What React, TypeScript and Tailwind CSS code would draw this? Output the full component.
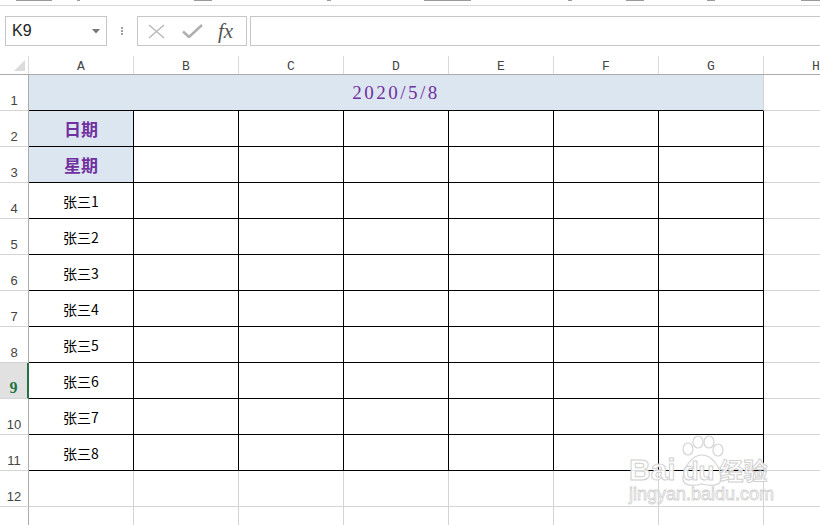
import React from 'react'

const cols = ['A', 'B', 'C', 'D', 'E', 'F', 'G']

function RowHeader({ n, hidden }: { n: number; hidden?: boolean }) {
  const active = n === 9
  return (
    <div
      className={
        active
          ? 'w-[29px] shrink-0 h-full flex items-end justify-center pb-[2px] bg-[#e1e1e1] border-r-2 border-b border-r-[#217346] border-b-[#d4d4d4]'
          : 'w-[29px] shrink-0 h-full flex items-end justify-center pb-[3px] border-r border-b border-r-[#ababab] border-b-[#d4d4d4]'
      }
    >
      {hidden ? null : active ? (
        <span className="font-['Liberation_Serif'] font-bold text-[16px] leading-none text-[#217346]">9</span>
      ) : (
        <span className="font-['Liberation_Sans'] text-[13px] leading-none text-[#444]">{n}</span>
      )}
    </div>
  )
}

function GrayCell() {
  return <div className="w-[105px] shrink-0 h-full border-r border-b border-[#d4d4d4]" />
}

function Watermark() {
  return (
    <div className="absolute left-[629px] top-[435px] w-[150px] pointer-events-none select-none">
      <svg width="52" height="54" viewBox="0 0 52 54" className="absolute left-[47px] top-0" fill="none" stroke="#d4d4d4" strokeWidth="1.2">
        <ellipse cx="12" cy="14" rx="5" ry="6" />
        <ellipse cx="22" cy="7" rx="5" ry="6" />
        <ellipse cx="33" cy="7" rx="5" ry="6" />
        <ellipse cx="42" cy="15" rx="5" ry="6" />
        <path d="M26 20 C16 20 8 32 7 42 C6 50 14 52 26 49 C38 52 46 50 45 42 C44 32 36 20 26 20 Z" />
      </svg>
      <div className="relative flex items-baseline mt-[20px] h-[30px] text-white/90 [-webkit-text-stroke:1px_#d0d0d0]">
        <span className="font-['Liberation_Sans'] font-bold text-[30px] leading-none">Bai</span>
        <span className="ml-[7px] font-['Liberation_Sans'] font-bold text-[26px] leading-none">du</span>
        <span className="ml-[5px] font-['Noto_Sans_CJK_SC',sans-serif] font-bold text-[24px] leading-none">经验</span>
      </div>
      <div className="relative h-[18px] font-['Liberation_Sans'] text-[18px] leading-none text-white/90 [-webkit-text-stroke:0.8px_#d0d0d0]">
        jingyan.baidu.com
      </div>
    </div>
  )
}

export default function App() {
  const names = ['张三1', '张三2', '张三3', '张三4', '张三5', '张三6', '张三7', '张三8']

  return (
    <div className="relative w-[820px] h-[525px] overflow-hidden bg-white flex flex-col">
      {/* clipped ribbon text above */}
      <div className="h-[6px] shrink-0 border-b border-[#d6d6d6] flex items-start">
        <div className="flex h-[2px] w-full">
          <span className="ml-[16px] w-[36px] h-[1px] bg-[#9a9a9a]" />
          <span className="ml-[25px] w-[3px] h-[1px] bg-[#9a9a9a]" />
          <span className="ml-[114px] w-[18px] h-[1px] bg-[#9a9a9a]" />
          <span className="ml-[115px] w-[4px] h-[1px] bg-[#9a9a9a]" />
          <span className="ml-[93px] w-[47px] h-[1px] bg-[#9a9a9a]" />
          <span className="ml-[97px] w-[4px] h-[1px] bg-[#9a9a9a]" />
          <span className="ml-[54px] w-[18px] h-[1px] bg-[#9a9a9a]" />
          <span className="ml-[63px] w-[8px] h-[1px] bg-[#9a9a9a]" />
          <span className="ml-[86px] w-[19px] h-[1px] bg-[#9a9a9a]" />
        </div>
      </div>

      {/* formula bar */}
      <div className="mt-[10px] h-[30px] shrink-0 flex">
        <div className="ml-[5px] w-[102px] h-full border border-[#c6c6c6] flex items-center pl-[6px] pr-[6px]">
          <span className="font-['Liberation_Sans'] text-[16px] text-[#222] leading-none">K9</span>
          <svg width="8" height="5" viewBox="0 0 8 5" className="ml-auto">
            <path d="M0 0 H8 L4 4.5 Z" fill="#777" />
          </svg>
        </div>
        <div className="w-[30px] flex flex-col items-center justify-center gap-[1px]">
          <span className="w-[2px] h-[2px] bg-[#a0a0a0]" />
          <span className="w-[2px] h-[2px] bg-[#a0a0a0]" />
          <span className="w-[2px] h-[2px] bg-[#a0a0a0]" />
        </div>
        <div className="w-[110px] h-full border border-[#c6c6c6] flex items-center pl-[9px]">
          <svg width="19" height="15" viewBox="0 0 19 15">
            <path d="M2 1 L17 14 M17 1 L2 14" stroke="#b8b8b8" strokeWidth="1.4" />
          </svg>
          <svg width="21" height="14" viewBox="0 0 21 14" className="ml-[16px]">
            <path d="M1 7.5 L7 13 L20 1" stroke="#b0b0b0" strokeWidth="2.6" fill="none" />
          </svg>
          <span className="ml-[15px] font-['Liberation_Serif'] italic text-[21px] leading-none text-[#555]">fx</span>
        </div>
        <div className="ml-[3px] flex-1 -mr-[2px] h-full border border-[#c6c6c6]" />
      </div>

      {/* column headers */}
      <div className="mt-[10px] h-[19px] shrink-0 flex border-b border-[#ababab]">
        <div className="w-[29px] shrink-0 border-r border-[#dadada] flex items-end justify-end pr-[3px] pb-[3px]">
          <svg width="11" height="11" viewBox="0 0 11 11">
            <path d="M11 0 V11 H0 Z" fill="#dcdcdc" />
          </svg>
        </div>
        {[...cols, 'H'].map((c) => (
          <div key={c} className="w-[105px] shrink-0 border-r border-[#dadada] flex items-end justify-center pb-[1px]">
            <span className="font-['Liberation_Mono'] text-[13px] leading-none text-[#444]">{c}</span>
          </div>
        ))}
      </div>

      {/* row 1 */}
      <div className="flex h-[36px] shrink-0">
        <RowHeader n={1} />
        <div className="w-[735px] shrink-0 h-full bg-[#dce6f1] border-r border-b border-r-[#d4d4d4] border-b-black flex items-center justify-center">
          <span className="font-['Liberation_Serif'] text-[19px] tracking-[2.5px] leading-none text-[#7030a0]">2020/5/8</span>
        </div>
        <GrayCell />
      </div>

      {/* rows 2-11 */}
      {Array.from({ length: 10 }, (_, i) => i + 2).map((r) => (
        <div key={r} className="flex h-[36px] shrink-0">
          <RowHeader n={r} />
          {cols.map((c) => (
            <div
              key={c}
              className={
                c === 'A' && r <= 3
                  ? 'w-[105px] shrink-0 h-full border-r border-b border-black bg-[#dce6f1] flex items-center justify-center'
                  : 'w-[105px] shrink-0 h-full border-r border-b border-black flex items-center justify-center'
              }
            >
              {c === 'A' && r === 2 && (
                <span className="font-['Noto_Sans_CJK_SC',sans-serif] font-bold text-[17px] leading-none text-[#7030a0]">日期</span>
              )}
              {c === 'A' && r === 3 && (
                <span className="font-['Noto_Sans_CJK_SC',sans-serif] font-bold text-[17px] leading-none text-[#7030a0]">星期</span>
              )}
              {c === 'A' && r >= 4 && (
                <span className="font-['Noto_Sans_CJK_SC',sans-serif] text-[14px] leading-none text-black">{names[r - 4]}</span>
              )}
            </div>
          ))}
          <GrayCell />
        </div>
      ))}

      {/* rows 12-13 */}
      {[12, 13].map((r) => (
        <div key={r} className="flex h-[36px] shrink-0">
          <RowHeader n={r} hidden={r === 13} />
          {[...cols, 'H'].map((c) => (
            <GrayCell key={c} />
          ))}
        </div>
      ))}

      <Watermark />
    </div>
  )
}
